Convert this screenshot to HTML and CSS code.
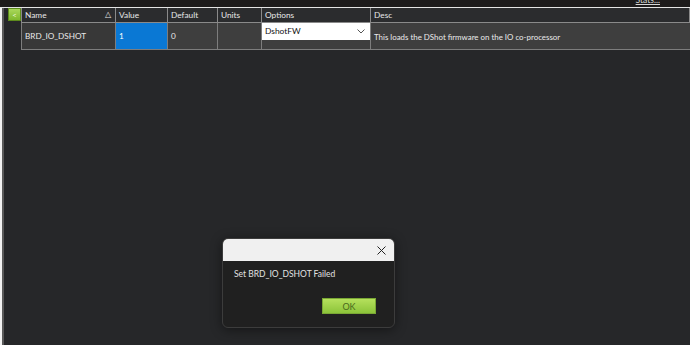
FILE: index.html
```html
<!DOCTYPE html>
<html lang="en">
<head>
    <meta charset="UTF-8">
    <title>Full Parameter List</title>
    <link rel="stylesheet" href="styles.css">
</head>
<body>
    <div class="topbar">
        <a class="stats-link">Stats...</a>
    </div>
    <div class="main">
        <div class="left-edge"></div>
        <div class="content">
            <button class="collapse-btn">&lt;</button>
            <table class="params">
                <thead>
                    <tr>
                        <th class="col-name">Name <span class="sort">&#9651;</span></th>
                        <th class="col-value">Value</th>
                        <th class="col-default">Default</th>
                        <th class="col-units">Units</th>
                        <th class="col-options">Options</th>
                        <th class="col-desc">Desc</th>
                    </tr>
                </thead>
                <tbody>
                    <tr>
                        <td class="name-cell">BRD_IO_DSHOT</td>
                        <td class="value-cell">1</td>
                        <td>0</td>
                        <td></td>
                        <td class="options-cell">
                            <div class="combo">
                                <span>DshotFW</span>
                                <svg width="8" height="5" viewBox="0 0 8 5"><path d="M0.5 0.5 L4 4 L7.5 0.5" fill="none" stroke="#555" stroke-width="1"/></svg>
                            </div>
                        </td>
                        <td class="desc-cell">This loads the DShot firmware on the IO co-processor</td>
                    </tr>
                </tbody>
            </table>
        </div>
    </div>

    <div class="dialog">
        <div class="dialog-title">
            <svg width="9" height="9" viewBox="0 0 9 9"><path d="M0.5 0.5 L8.5 8.5 M8.5 0.5 L0.5 8.5" stroke="#222" stroke-width="1"/></svg>
        </div>
        <div class="dialog-body">
            <p class="dialog-msg">Set BRD_IO_DSHOT Failed</p>
            <div class="dialog-actions">
                <button class="ok-btn">OK</button>
            </div>
        </div>
    </div>
</body>
</html>
```

FILE: styles.css
```css
* {
    margin: 0;
    padding: 0;
    box-sizing: border-box;
    font-family: Lato, 'Liberation Sans', sans-serif;
}

body {
    width: 690px;
    height: 345px;
    background-color: #262729;
    color: #e6e6e6;
    overflow: hidden;
    font-size: 8px;
}

.topbar {
    height: 8px;
    background-color: #1d1b1b;
    border-bottom: 1px solid #e4e4e4;
    display: flex;
    justify-content: flex-end;
    overflow: hidden;
}

.stats-link {
    color: #d8d8d8;
    text-decoration: underline;
    font-size: 8.5px;
    line-height: 9px;
    margin-top: -4px;
    margin-right: 30px;
}

.main {
    display: flex;
    height: 337px;
}

.left-edge {
    width: 5px;
    background-color: #f2f2f2;
    border-right: 2px solid #5a5a5a;
}

.content {
    display: flex;
    align-items: flex-start;
    padding-left: 4px;
}

.collapse-btn {
    width: 13px;
    height: 13px;
    background: linear-gradient(#a9d85a, #7fb82d);
    border: 1px solid #5d8a1c;
    color: #eef7dc;
    font-size: 8px;
    line-height: 10px;
}

/* Parameter grid */
.params {
    border-collapse: collapse;
    table-layout: fixed;
    width: 669px;
}

.params th {
    background-color: #2b2c2e;
    color: #e8e8e8;
    font-weight: normal;
    font-size: 8.3px;
    text-align: left;
    height: 14px;
    padding: 0 3px;
    border: 1px solid #8a8a8a;
    border-top: none;
    position: relative;
}

.sort {
    position: absolute;
    right: 4px;
    top: 1px;
    font-size: 8px;
}

.col-name { width: 94px; }
.col-value { width: 52px; }
.col-default { width: 50px; }
.col-units { width: 44px; }
.col-options { width: 109px; }

.params td {
    background-color: #3e3e3e;
    height: 27px;
    padding: 0 3px;
    border: 1px solid #7d7d7d;
    color: #eaeaea;
    white-space: nowrap;
    font-size: 8.2px;
}

.params .name-cell {
    background-color: #383838;
}

.params .value-cell {
    background-color: #0a78d4;
    color: #fff;
}

.params .options-cell {
    padding: 0;
    vertical-align: top;
}

.combo {
    background-color: #fff;
    color: #111;
    height: 17px;
    display: flex;
    align-items: center;
    justify-content: space-between;
    padding: 0 5px 0 3px;
    font-size: 8.4px;
}

.params .desc-cell {
    border-right: none;
    padding-top: 3px;
    font-size: 7.9px;
}

/* Message box */
.dialog {
    position: absolute;
    left: 222px;
    top: 238px;
    width: 173px;
    height: 90px;
    border: 1px solid #3c3c3c;
    border-radius: 6px;
    background-color: #202020;
    overflow: hidden;
    box-shadow: 0 2px 12px rgba(0, 0, 0, 0.45);
}

.dialog-title {
    height: 22px;
    background-color: #f0f0f0;
    display: flex;
    justify-content: flex-end;
    align-items: center;
    padding-right: 8px;
}

.dialog-body {
    padding: 8px 18px 0 11px;
}

.dialog-msg {
    color: #e2e2e2;
    font-size: 8.5px;
}

.dialog-actions {
    display: flex;
    justify-content: flex-end;
    margin-top: 19px;
}

.ok-btn {
    width: 54px;
    height: 16px;
    background: linear-gradient(#b5e05c, #8cc43a);
    border: 1px solid #7aa834;
    color: #4b6a1d;
    font-size: 9px;
}
```
